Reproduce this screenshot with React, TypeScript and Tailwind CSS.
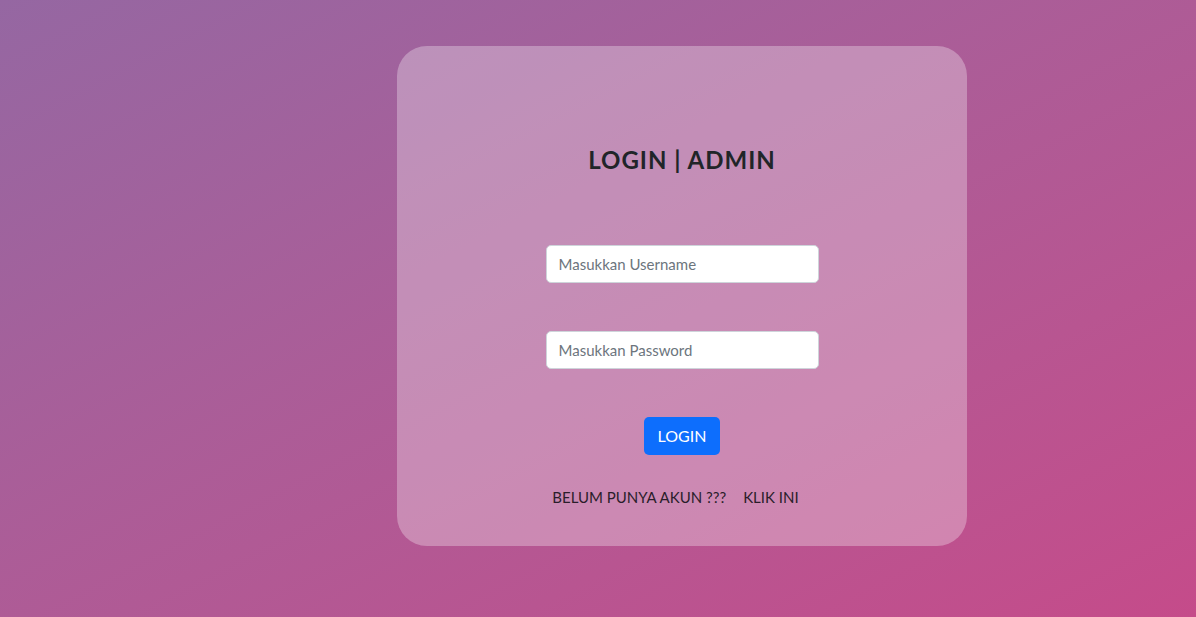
import React from 'react';

export default function App() {
  return (
    <div
      className="min-h-[617px] w-full bg-gradient-to-br from-[#9567a2] to-[#c54b8a] pt-[46px] pl-[397px]"
      style={{ fontFamily: 'Lato, "Open Sans", sans-serif' }}
    >
      <div className="flex h-[500px] w-[570px] flex-col items-center rounded-[30px] bg-white/30">
        <h1 className="mt-[99px] text-[24px] font-bold leading-[30px] tracking-[1px] text-[#212529]">
          LOGIN | ADMIN
        </h1>
        <form className="mt-[70px] flex flex-col items-center">
          <input
            type="text"
            placeholder="Masukkan Username"
            className="h-[38px] w-[273px] rounded-[5px] border border-[#ced4da] bg-white px-3 text-[15px] text-[#212529] placeholder:text-[#6c757d] outline-none"
          />
          <input
            type="password"
            placeholder="Masukkan Password"
            className="mt-[48px] h-[38px] w-[273px] rounded-[5px] border border-[#ced4da] bg-white px-3 text-[15px] text-[#212529] placeholder:text-[#6c757d] outline-none"
          />
          <button
            type="button"
            className="mt-[48px] h-[38px] w-[76px] rounded-[5px] bg-[#0d6efd] text-[16px] text-white"
          >
            LOGIN
          </button>
        </form>
        <div className="mt-[32px] mr-[13px] flex gap-[17px] text-[15px] leading-[20px] text-[#2a1d2a]">
          <span>BELUM PUNYA AKUN ???</span>
          <a href="#" className="text-[#2a1d2a]">KLIK INI</a>
        </div>
      </div>
    </div>
  );
}
